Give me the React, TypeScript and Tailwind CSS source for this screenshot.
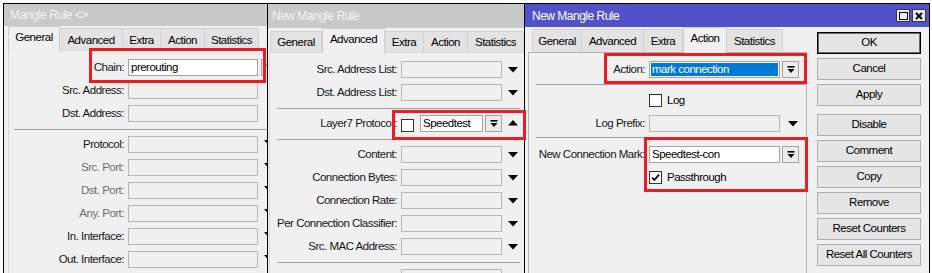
import React from 'react';

type TabDef = { label: string; w: string };

const TABS_1: TabDef[] = [
  { label: 'General', w: 'w-[52px]' },
  { label: 'Advanced', w: 'w-[63px]' },
  { label: 'Extra', w: 'w-[38px]' },
  { label: 'Action', w: 'w-[44px]' },
  { label: 'Statistics', w: 'w-[54px]' },
];

const TABS_2: TabDef[] = [
  { label: 'General', w: 'w-[52px]' },
  { label: 'Advanced', w: 'w-[63px]' },
  { label: 'Extra', w: 'w-[39px]' },
  { label: 'Action', w: 'w-[44px]' },
  { label: 'Statistics', w: 'w-[56px]' },
];

const TABS_3: TabDef[] = [
  { label: 'General', w: 'w-[50px]' },
  { label: 'Advanced', w: 'w-[62px]' },
  { label: 'Extra', w: 'w-[39px]' },
  { label: 'Action', w: 'w-[44px]' },
  { label: 'Statistics', w: 'w-[56px]' },
];

const BUTTONS = ['Cancel', 'Apply', 'Disable', 'Comment', 'Copy', 'Remove', 'Reset Counters', 'Reset All Counters'];

const TabStrip: React.FC<{ tabs: TabDef[]; active: number; hOn: string; hOff: string; className: string }> = ({
  tabs,
  active,
  hOn,
  hOff,
  className,
}) => (
  <div className={`flex items-end ${className}`}>
    {tabs.map((t, i) =>
      i === active ? (
        <div
          key={t.label}
          className={`${t.w} ${hOn} relative z-10 -mb-px pb-[3px] flex items-center justify-center bg-[#f0f0f0] border border-b-0 border-[#cdcdcd]`}
        >
          {t.label}
        </div>
      ) : (
        <div
          key={t.label}
          className={`${t.w} ${hOff} pt-[2px] flex items-center justify-center bg-[#e3e3e3] border-t border-r border-[#d2d2d2] ${i === 0 ? 'border-l' : ''}`}
        >
          {t.label}
        </div>
      )
    )}
  </div>
);

const Label: React.FC<{ w: string; gray?: boolean; children: React.ReactNode }> = ({ w, gray, children }) => (
  <div className={`${w} shrink-0 text-right whitespace-nowrap overflow-hidden leading-[17px] ${gray ? 'text-[#6d6d6d]' : 'text-[#161616]'}`}>
    {children}
  </div>
);

const Field: React.FC<{ w: string; white?: boolean; className?: string; children?: React.ReactNode }> = ({
  w,
  white,
  className = '',
  children,
}) => (
  <div
    className={`${w} h-[17px] shrink-0 border ${white ? 'bg-white border-[#a3a3a3]' : 'bg-[#f0f0f0] border-[#b7b7b7]'} ${className} flex items-center whitespace-nowrap overflow-hidden leading-none text-black`}
  >
    {children}
  </div>
);

const ComboBtn: React.FC<{ className?: string }> = ({ className = '' }) => (
  <div className={`w-[17px] h-[17px] shrink-0 border border-[#a3a3a3] bg-[#ececec] flex items-center justify-center ${className}`}>
    <svg width="8" height="8" viewBox="0 0 8 8">
      <rect x="0.5" y="0" width="7" height="1.6" fill="#000" />
      <polygon points="0.5,3 7.5,3 4,7" fill="#000" />
    </svg>
  </div>
);

const Down: React.FC<{ className?: string }> = ({ className = '' }) => (
  <svg width="10" height="6" viewBox="0 0 10 6" className={`shrink-0 ${className}`}>
    <polygon points="0,0 10,0 5,5.5" fill="#000" />
  </svg>
);

const Up: React.FC<{ className?: string }> = ({ className = '' }) => (
  <svg width="10" height="6" viewBox="0 0 10 6" className={`shrink-0 ${className}`}>
    <polygon points="0,5.5 10,5.5 5,0" fill="#000" />
  </svg>
);

const Check: React.FC<{ checked?: boolean; className?: string }> = ({ checked, className = '' }) => (
  <div className={`w-[13px] h-[13px] shrink-0 border border-[#333] bg-white flex items-center justify-center ${className}`}>
    {checked && (
      <svg width="9" height="9" viewBox="0 0 9 9">
        <path d="M1 4.6 L3.4 7 L8 1.6" stroke="#000" strokeWidth="1.8" fill="none" />
      </svg>
    )}
  </div>
);

// first window: General tab
const GeneralWindow = () => {
  const rows: { label: string; gray?: boolean }[] = [
    { label: 'Protocol:' },
    { label: 'Src. Port:', gray: true },
    { label: 'Dst. Port:', gray: true },
    { label: 'Any. Port:', gray: true },
    { label: 'In. Interface:' },
    { label: 'Out. Interface:' },
  ];
  return (
    <div className="absolute left-[3px] top-[3px] w-[300px] h-[300px] border border-black bg-[#f0f0f0] z-0">
      <div className="h-[22px] bg-[#c9c9c9] pl-[6px] flex items-center text-[#f3f3f3] text-[12px]">Mangle Rule &lt;&gt;</div>
      <TabStrip tabs={TABS_1} active={0} hOn="h-[25px]" hOff="h-[22px]" className="h-[24px] pl-[4px]" />
      <div className="ml-[4px] w-[292px] h-[260px] border border-[#d9d9d9] pt-[8px]">
        <div className="flex items-center h-[17px]">
          <Label w="w-[115px]">Chain:</Label>
          <Field w="w-[130px]" white className="ml-[4px] pl-[2px]">prerouting</Field>
          <ComboBtn className="ml-[3px]" />
        </div>
        <div className="flex items-center h-[17px] mt-[6px]">
          <Label w="w-[115px]">Src. Address:</Label>
          <Field w="w-[130px]" className="ml-[4px]" />
        </div>
        <div className="flex items-center h-[17px] mt-[6px]">
          <Label w="w-[115px]">Dst. Address:</Label>
          <Field w="w-[130px]" className="ml-[4px]" />
        </div>
        <div className="ml-[5px] w-[280px] h-px bg-[#a0a0a0] mt-[7px]" />
        {rows.map((r) => (
          <div key={r.label} className="flex items-center h-[17px] mt-[6px]">
            <Label w="w-[115px]" gray={r.gray}>
              {r.label}
            </Label>
            <Field w="w-[130px]" className="ml-[4px]" />
            <Down className="ml-[6px] -mt-[3px]" />
          </div>
        ))}
      </div>
    </div>
  );
};

// second window: Advanced tab
const AdvancedWindow = () => {
  const rows = ['Content:', 'Connection Bytes:', 'Connection Rate:', 'Per Connection Classifier:', 'Src. MAC Address:'];
  return (
    <div className="absolute left-[267px] top-[3px] w-[300px] h-[300px] border border-black bg-[#f0f0f0] z-10">
      <div className="h-[24px] bg-[#c9c9c9] pl-[4px] flex items-center text-[#f3f3f3] text-[12px]">New Mangle Rule</div>
      <TabStrip tabs={TABS_2} active={1} hOn="h-[25px]" hOff="h-[21px]" className="h-[24px] pl-[2px]" />
      <div className="ml-[1px] w-[290px] h-[260px] border border-[#d9d9d9] pt-[8px]">
        {['Src. Address List:', 'Dst. Address List:'].map((l, i) => (
          <div key={l} className={`flex items-center h-[17px] ${i ? 'mt-[6px]' : ''}`}>
            <Label w="w-[127px]">{l}</Label>
            <Field w="w-[101px]" className="ml-[4px]" />
            <Down className="ml-[6px]" />
          </div>
        ))}
        <div className="ml-[7px] w-[243px] h-px bg-[#a0a0a0] mt-[7px]" />
        <div className="flex items-center h-[17px] mt-[6px]">
          <Label w="w-[127px]">
            Layer7 Protoco<span className="ml-[3px]">:</span>
          </Label>
          <Check className="ml-[4px] mt-[4px]" />
          <Field w="w-[63px]" white className="ml-[6px] pl-[2px]">Speedtest</Field>
          <ComboBtn className="ml-[2px]" />
          <Up className="ml-[6px] -mt-[2px]" />
        </div>
        <div className="ml-[7px] w-[243px] h-px bg-[#a0a0a0] mt-[7px]" />
        {rows.map((l) => (
          <div key={l} className="flex items-center h-[17px] mt-[6px]">
            <Label w="w-[127px]">{l}</Label>
            <Field w="w-[101px]" className="ml-[4px]" />
            <Down className="ml-[6px]" />
          </div>
        ))}
        <div className="ml-[7px] w-[243px] h-px bg-[#a0a0a0] mt-[7px]" />
        <div className="flex items-center h-[17px] mt-[6px]">
          <Label w="w-[127px]"> </Label>
          <Field w="w-[101px]" className="ml-[4px]" />
        </div>
      </div>
    </div>
  );
};

// third window: Action tab, active
const ActionWindow = () => (
  <div className="absolute left-[524px] top-[3px] w-[406px] h-[300px] border border-black bg-[#f0f0f0] z-20">
    <div className="h-[23px] bg-[#5151cc] pl-[7px] flex items-center text-white text-[12px]">
      New Mangle Rule
      <div className="ml-auto mr-[3px] flex gap-[2px]">
        <div className="w-[14px] h-[13px] border border-[#3a3a3a] bg-[#e8e8e8] flex items-center justify-center">
          <div className="w-[9px] h-[8px] border-[1.5px] border-black" />
        </div>
        <div className="w-[14px] h-[13px] border border-[#3a3a3a] bg-[#e8e8e8] flex items-center justify-center">
          <svg width="8" height="8" viewBox="0 0 8 8">
            <path d="M1 1 L7 7 M7 1 L1 7" stroke="#000" strokeWidth="2" />
          </svg>
        </div>
      </div>
    </div>
    <div className="flex">
      <div className="w-[282px]">
        <TabStrip tabs={TABS_3} active={3} hOn="h-[26px]" hOff="h-[23px]" className="h-[25px] pl-[7px]" />
        <div className="ml-[3px] w-[279px] h-[260px] border border-[#b5b5b5] pt-[8px]">
          <div className="flex items-center h-[17px]">
            <Label w="w-[116px]">Action:</Label>
            <Field w="w-[131px]" white className="ml-[4px] p-px">
              <span className="h-full flex-1 bg-[#0078d7] text-white flex items-center pl-[1px]">mark connection</span>
            </Field>
            <ComboBtn className="ml-[2px]" />
          </div>
          <div className="ml-[7px] w-[269px] h-px bg-[#a0a0a0] mt-[6px]" />
          <div className="flex items-center h-[17px] mt-[7px]">
            <div className="w-[116px] shrink-0" />
            <Check className="ml-[4px]" />
            <span className="ml-[5px] leading-none">Log</span>
          </div>
          <div className="flex items-center h-[17px] mt-[6px]">
            <Label w="w-[116px]">Log Prefix:</Label>
            <Field w="w-[131px]" className="ml-[4px]" />
            <Down className="ml-[8px]" />
          </div>
          <div className="ml-[7px] w-[269px] h-px bg-[#a0a0a0] mt-[5px]" />
          <div className="flex items-center h-[17px] mt-[8px]">
            <Label w="w-[116px]">New Connection Mark:</Label>
            <Field w="w-[131px]" white className="ml-[4px] pl-[2px]">Speedtest-con</Field>
            <ComboBtn className="ml-[2px]" />
          </div>
          <div className="flex items-center h-[17px] mt-[6px]">
            <div className="w-[116px] shrink-0" />
            <Check checked className="ml-[4px]" />
            <span className="ml-[5px] leading-none">Passthrough</span>
          </div>
        </div>
      </div>
      <div className="ml-[10px] pt-[5px] w-[104px] flex flex-col">
        <div className="h-[22px] border border-black shadow-[inset_0_0_0_1px_#6a6a6a] bg-[#e5e5e5] flex items-center justify-center">OK</div>
        {BUTTONS.map((b) => (
          <div
            key={b}
            className={`h-[22px] border border-[#adadad] bg-[#e5e5e5] flex items-center justify-center ${b === 'Disable' ? 'mt-[8px]' : 'mt-[4px]'}`}
          >
            {b}
          </div>
        ))}
      </div>
    </div>
  </div>
);

export default function App() {
  return (
    <div className="relative w-[932px] h-[273px] overflow-hidden bg-white text-black text-[11.5px] tracking-[-0.5px] font-['Liberation_Sans',Arial,sans-serif]">
      <GeneralWindow />
      <AdvancedWindow />
      <ActionWindow />
      {/* red highlight boxes drawn over the windows */}
      <div className="absolute left-[89px] top-[48px] w-[177px] h-[35px] border-[3px] border-[#ec1c24] z-30" />
      <div className="absolute left-[392px] top-[110px] w-[134px] h-[30px] border-[3px] border-[#ec1c24] z-30" />
      <div className="absolute left-[604px] top-[53px] w-[203px] h-[31px] border-[3px] border-[#ec1c24] z-30" />
      <div className="absolute left-[644px] top-[137px] w-[164px] h-[55px] border-[3px] border-[#ec1c24] z-30" />
    </div>
  );
}
